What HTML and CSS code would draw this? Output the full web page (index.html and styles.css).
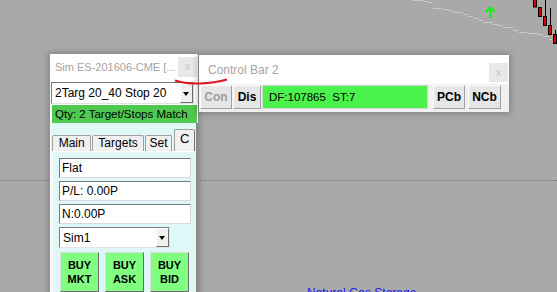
FILE: index.html
```html
<!DOCTYPE html>
<html lang="en">
<head>
  <meta charset="UTF-8">
  <title>Chart Trader</title>
  <link rel="stylesheet" href="styles.css">
</head>
<body>
  <div class="desk">
    <svg class="chart" width="557" height="292" viewBox="0 0 557 292">
      <line class="dots" x1="0" y1="180.5" x2="557" y2="180.5"/>
      <path class="trail" d="M413 0.5h10M423 1.5h5M428 2.5h5M433 8.5h9M443 9.5h5M448 10.5h5M453 12.5h10M463 14.5h5M468 16.5h5M474 18.5h5M479 20.5h4M483 22.5h10M493 24.5h5M498 25.5h5M503 27.5h10M513 30.5h5M519 32.5h8M528 33.5h10M538 34.5h5M543 36.5h6M549 39.5h3"/>
      <path class="arrow" d="M490.5 18V8M486 12l4.5-4.5 4.5 4.5"/>
      <path class="wick" d="M545.5 0V16M550.5 8V25M555.5 30V34"/>
      <rect class="bar" x="533.5" y="-1" width="3" height="8"/>
      <rect class="bar" x="538.5" y="7.5" width="3" height="9"/>
      <rect class="bar" x="543.5" y="16.5" width="3" height="9"/>
      <rect class="bar" x="548.5" y="25.5" width="3" height="9"/>
      <rect class="bar" x="553.5" y="34.5" width="3" height="9"/>
    </svg>

    <div class="news">Natural Gas Storage</div>

    <!-- order entry window -->
    <div class="win atm">
      <div class="atm-title">
        <span class="ttl">Sim ES-201606-CME [...</span>
        <span class="xbtn">x</span>
      </div>
      <div class="combo strategy">
        <span class="combo-val">2Targ 20_40 Stop 20</span>
        <span class="drop"></span>
      </div>
      <div class="qty">Qty: 2 Target/Stops Match</div>
      <div class="cyan">
        <div class="tabs">
          <div class="tab t-main">Main</div>
          <div class="tab t-targets">Targets</div>
          <div class="tab t-set">Set</div>
          <div class="tab t-c active">C</div>
        </div>
        <div class="panel">
          <div class="field">Flat</div>
          <div class="field">P/L: 0.00P</div>
          <div class="field">N:0.00P</div>
          <div class="combo account">
            <span class="combo-val">Sim1</span>
            <span class="drop"></span>
          </div>
          <div class="buys">
            <button class="buy">BUY<br>MKT</button>
            <button class="buy">BUY<br>ASK</button>
            <button class="buy">BUY<br>BID</button>
          </div>
        </div>
      </div>
    </div>

    <!-- control bar window -->
    <div class="win cbar">
      <div class="cbar-title">
        <span class="ttl">Control Bar 2</span>
        <span class="xbtn">x</span>
      </div>
      <div class="cbar-row">
        <button class="cb-btn b-con">Con</button>
        <button class="cb-btn b-dis">Dis</button>
        <div class="df">DF:107865&nbsp;&nbsp;ST:7</div>
        <button class="cb-btn b-pcb">PCb</button>
        <button class="cb-btn b-ncb">NCb</button>
      </div>
    </div>

    <svg class="mark" width="64" height="14" viewBox="0 0 64 14">
      <path d="M5 6.5Q15 10 30 9.5T57 5.5"/>
    </svg>
  </div>
</body>
</html>
```

FILE: styles.css
```css
body {
  margin: 0;
  font-family: "Liberation Sans", Arial, sans-serif;
}
.desk {
  position: relative;
  width: 557px;
  height: 292px;
  overflow: hidden;
  background-color: #a9a9a9;
}
.chart {
  position: absolute;
  left: 0;
  top: 0;
}
.dots {
  stroke: #7c7c7c;
  stroke-width: 1;
  stroke-dasharray: 1 1;
}
.trail {
  stroke: #cbcbcb;
  stroke-width: 1;
  fill: none;
}
.arrow {
  stroke: #14ee14;
  stroke-width: 2;
  fill: none;
}
.wick {
  stroke: #000;
  stroke-width: 1;
}
.bar {
  fill: #e00000;
  stroke: #000;
  stroke-width: 1;
}
.news {
  position: absolute;
  left: 307px;
  top: 286px;
  font-size: 12px;
  color: #1818ee;
}

/* windows */
.win {
  position: absolute;
  box-shadow: 0 0 7px 1px rgba(0, 0, 0, 0.28);
}
.xbtn {
  width: 19px;
  height: 20px;
  background-color: #e8e8e8;
  color: #c4c4c4;
  font-size: 11px;
  line-height: 18px;
  text-align: center;
}
.atm {
  left: 50px;
  top: 54px;
  width: 148px;
  height: 250px;
  background-color: #fff;
}
.atm-title {
  height: 26px;
  display: flex;
  justify-content: space-between;
  align-items: flex-start;
  padding-left: 5px;
}
.atm-title .ttl {
  margin-top: 7px;
  font-size: 11px;
  color: #a3a3a3;
}
.atm-title .xbtn {
  margin-top: 3px;
  margin-right: 1px;
}
.combo {
  display: flex;
  align-items: center;
  box-sizing: border-box;
  background-color: #fff;
  border: 1px solid;
  border-color: #7b7b7b #e3e3e3 #e3e3e3 #7b7b7b;
}
.combo-val {
  flex: 1;
  padding-left: 3px;
  font-size: 12px;
  color: #000;
}
.drop {
  position: relative;
  width: 13px;
  height: 19px;
  margin-right: 0;
  box-sizing: border-box;
  background-color: #f0f0f0;
  border: 1px solid;
  border-color: #fff #6d6d6d #6d6d6d #fff;
}
.drop::after {
  content: "";
  position: absolute;
  left: 2px;
  top: 7px;
  border-left: 3.5px solid transparent;
  border-right: 3.5px solid transparent;
  border-top: 4px solid #000;
}
.strategy {
  margin: 2px 0 0 1px;
  width: 143px;
  height: 22px;
}
.qty {
  margin: 1px 0 0 2px;
  width: 145px;
  height: 18px;
  box-sizing: border-box;
  padding-left: 3px;
  background-color: #4fc94f;
  font-size: 11.5px;
  line-height: 18px;
}
.cyan {
  margin-left: 1px;
  width: 147px;
  height: 170px;
  box-sizing: border-box;
  padding-top: 6px;
  background-color: #dff7f7;
  border-right: 2px solid #8a8a8a;
}
.tabs {
  display: flex;
  align-items: flex-end;
  height: 22px;
  padding-left: 1px;
}
.tab {
  height: 16px;
  box-sizing: border-box;
  margin-right: 1px;
  border: 1px solid #a0a0a0;
  border-bottom: none;
  border-radius: 2px 2px 0 0;
  background-color: #f0f0f0;
  font-size: 12px;
  line-height: 15px;
  text-align: center;
}
.t-main { width: 40px; }
.t-targets { width: 52px; }
.t-set { width: 28px; }
.t-c {
  width: 21px;
  height: 22px;
  margin-left: 1px;
  line-height: 17px;
  font-size: 13px;
  border-right-color: #6f6f6f;
}
.panel {
  margin-left: 1px;
  height: 150px;
  padding: 6px 0 0 6px;
  border-top: 1px solid #fff;
  border-left: 1px solid #fff;
}
.field {
  width: 132px;
  height: 20px;
  box-sizing: border-box;
  margin-bottom: 3px;
  padding-left: 2px;
  background-color: #fff;
  border: 1px solid;
  border-color: #7a7a7a #dadada #dadada #7a7a7a;
  font-size: 12px;
  line-height: 18px;
}
.account {
  width: 111px;
  height: 21px;
}
.buys {
  display: flex;
  gap: 6px;
  margin-top: 4px;
  padding-left: 1px;
}
.buy {
  width: 39px;
  height: 40px;
  padding: 0;
  background-color: #80ff80;
  border: 1px solid;
  border-color: #dcdcdc #6b6b6b #6b6b6b #dcdcdc;
  font-family: "Liberation Sans", Arial, sans-serif;
  font-weight: bold;
  font-size: 11px;
  line-height: 14px;
  color: #000;
}

/* control bar */
.cbar {
  left: 199px;
  top: 55px;
  width: 310px;
  height: 57px;
  background-color: #f0f0f0;
}
.cbar-title {
  height: 29px;
  display: flex;
  justify-content: space-between;
  align-items: flex-start;
  padding-left: 9px;
  background-color: #fff;
}
.cbar-title .ttl {
  margin-top: 8px;
  font-size: 12px;
  color: #a5a5a5;
}
.cbar-title .xbtn {
  margin-top: 8px;
  margin-right: 1px;
  height: 19px;
}
.cbar-row {
  display: flex;
  padding-top: 1px;
}
.cb-btn {
  height: 24px;
  padding: 0;
  background-color: #e6e6e6;
  border: 1px solid;
  border-color: #fdfdfd #a0a0a0 #a0a0a0 #fdfdfd;
  font-family: "Liberation Sans", Arial, sans-serif;
  font-weight: bold;
  font-size: 12px;
  color: #000;
}
.b-con {
  width: 32px;
  margin-left: 1px;
  color: #9d9d9d;
}
.b-dis {
  width: 28px;
  margin-left: 1px;
}
.df {
  width: 166px;
  height: 24px;
  box-sizing: border-box;
  margin-left: 1px;
  padding-left: 6px;
  background-color: #4cf24c;
  border: 1px solid #d6d6d6;
  font-size: 11.5px;
  line-height: 22px;
}
.b-pcb {
  width: 32px;
  margin-left: 5px;
}
.b-ncb {
  width: 33px;
  margin-left: 3px;
}
.mark {
  position: absolute;
  left: 170px;
  top: 74px;
}
.mark path {
  stroke: #e0141e;
  stroke-width: 2;
  fill: none;
}
```
